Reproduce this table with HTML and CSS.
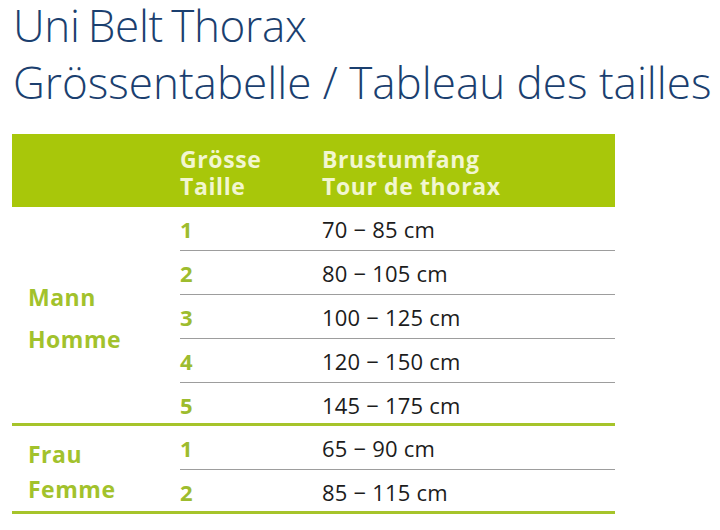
FILE: index.html
```html
<!DOCTYPE html>
<html lang="de">
<head>
<meta charset="utf-8">
<title>Uni Belt Thorax – Grössentabelle</title>
<link rel="stylesheet" href="styles.css">
</head>
<body>
<div class="page">
  <h1 class="title">
    <span class="title-line title-first">Uni Belt Thorax</span>
    <span class="title-line title-second">Grössentabelle / Tableau des tailles</span>
  </h1>
  <div class="table">
    <div class="head">
      <div class="head-cell head-empty"></div>
      <div class="head-cell head-size"><span>Grösse</span><span>Taille</span></div>
      <div class="head-cell head-range"><span>Brustumfang</span><span>Tour de thorax</span></div>
    </div>
    <div class="group group-man">
      <div class="label"><span>Mann</span><span>Homme</span></div>
      <div class="rows">
        <div class="row"><span class="size">1</span><span class="range">70 − 85 cm</span></div>
        <div class="row"><span class="size">2</span><span class="range">80 − 105 cm</span></div>
        <div class="row"><span class="size">3</span><span class="range">100 − 125 cm</span></div>
        <div class="row"><span class="size">4</span><span class="range">120 − 150 cm</span></div>
        <div class="row row-last"><span class="size">5</span><span class="range">145 − 175 cm</span></div>
      </div>
    </div>
    <div class="group group-woman">
      <div class="label"><span>Frau</span><span>Femme</span></div>
      <div class="rows">
        <div class="row"><span class="size">1</span><span class="range">65 − 90 cm</span></div>
        <div class="row row-last row-final"><span class="size">2</span><span class="range">85 − 115 cm</span></div>
      </div>
    </div>
  </div>
</div>
</body>
</html>
```

FILE: styles.css
```css
* { box-sizing: border-box; }
html, body { margin: 0; padding: 0; background: #ffffff; }
body { width: 720px; height: 530px; overflow: hidden; font-family: "Open Sans", "Liberation Sans", sans-serif; }

.page { padding-left: 12px; }

.title {
  margin: 0;
  padding-left: 1px;
  font-family: "Open Sans", "Liberation Sans", sans-serif;
  font-weight: 300;
  font-size: 44px;
  color: #1b3f6f;
}
.title-line { display: block; white-space: nowrap; }
.title-first { line-height: 51px; word-spacing: -3px; letter-spacing: -0.3px; }
.title-second { line-height: 63px; }

.table { width: 603px; margin-top: 20px; }

.head {
  display: grid;
  grid-template-columns: 168px 142px 1fr;
  height: 73px;
  background: #a8c70a;
  padding-top: 12px;
}
.head-cell {
  display: flex;
  flex-direction: column;
  font-weight: 700;
  font-size: 23px;
  line-height: 27px;
  letter-spacing: 0.6px;
  color: #f2f6d0;
  white-space: nowrap;
}

.group {
  display: grid;
  grid-template-columns: 168px 1fr;
  border-bottom: 3px solid #a6c42a;
}
.label {
  display: flex;
  flex-direction: column;
  justify-content: center;
  padding-left: 16px;
  font-weight: 700;
  font-size: 23px;
  letter-spacing: 0.5px;
  color: #a2c22c;
}
.group-man .label { line-height: 42px; padding-top: 6px; }
.group-woman .label { line-height: 35px; padding-top: 6px; }

.row {
  display: grid;
  grid-template-columns: 142px 1fr;
  height: 44px;
  line-height: 44px;
  font-size: 22px;
  border-bottom: 1px solid #9d9d9d;
}
.row-last { border-bottom: none; height: 40px; }
.row-final { height: 41px; }
.size { font-weight: 700; color: #9dbc2e; }
.range { font-weight: 400; color: #1c1c1c; letter-spacing: 0.2px; }
```
